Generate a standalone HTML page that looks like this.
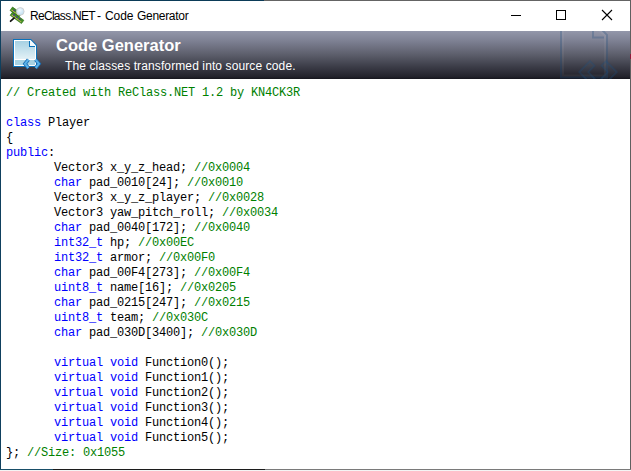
<!DOCTYPE html>
<html><head><meta charset="utf-8">
<style>
html,body{margin:0;padding:0;width:631px;height:471px;overflow:hidden;background:#fff;}
#win{position:absolute;left:0;top:0;width:631px;height:471px;background:#fff;}
.bd{position:absolute;}
#title{position:absolute;left:30px;top:7px;font-family:"Liberation Sans",sans-serif;font-size:12px;color:#000;white-space:nowrap;line-height:18px;}
#hdr{position:absolute;left:1px;top:31px;width:629px;height:48px;background:linear-gradient(#9397aa 0%,#7c7f91 22%,#5e606d 48%,#3c3d48 74%,#23232c 95%,#16161d 100%);overflow:hidden;}
#h1{position:absolute;left:56px;top:35px;font-family:"Liberation Sans",sans-serif;font-weight:bold;font-size:16.5px;color:#fff;white-space:nowrap;line-height:20px;}
#h2{position:absolute;left:65px;top:59px;font-family:"Liberation Sans",sans-serif;font-size:12px;letter-spacing:0.11px;color:#fff;white-space:nowrap;line-height:14px;}
#code{position:absolute;left:6px;top:86px;font-family:"Liberation Mono",monospace;font-size:12px;letter-spacing:-0.2px;line-height:15px;white-space:pre;color:#000;margin:0;}
.k{color:#0000ff;}
.c{color:#008000;}
.t{display:inline-block;width:48px;}
</style></head><body>
<div id="win">
  <div id="title"><span style="position:absolute;left:0;letter-spacing:-0.7px">ReClass.NET</span><span style="position:absolute;left:67px">-</span><span style="position:absolute;left:75px;letter-spacing:-0.1px">Code</span><span style="position:absolute;left:107px;letter-spacing:-0.3px">Generator</span></div>
  <div id="hdr"></div>
<svg id="ov" width="631" height="471" viewBox="0 0 631 471" style="position:absolute;left:0;top:0">
<!-- borders -->
<rect x="0" y="0" width="264" height="1" fill="#0b3b58"/>
<rect x="264" y="0" width="367" height="1" fill="#646464"/>
<rect x="0" y="0" width="1" height="470" fill="#0f405e"/>
<rect x="630" y="0" width="1" height="470" fill="#606060"/>
<rect x="630" y="54" width="1" height="5" fill="#8e1a3a"/>
<rect x="0" y="469" width="53" height="1" fill="#184e68"/>
<rect x="53" y="469" width="212" height="1" fill="#1c1c1c"/>
<rect x="265" y="469" width="366" height="1" fill="#7a7a7a"/>
<rect x="0" y="470" width="631" height="1" fill="#f4f4f4"/>
<!-- caption buttons -->
<rect x="511" y="15" width="10" height="1" fill="#000"/>
<rect x="556.5" y="10.5" width="9" height="9" fill="none" stroke="#000" stroke-width="1"/>
<path d="M602 10 L612 20 M612 10 L602 20" stroke="#000" stroke-width="1.1" fill="none"/>
<!-- app icon -->
<g>
<g transform="translate(0.8 0.9) rotate(36 15 11)"><rect x="9.5" y="9" width="11" height="4.2" fill="#3f8f22" stroke="#2a6a14" stroke-width="0.6"/><rect x="10.3" y="11.6" width="9.5" height="0.8" fill="#cdbb55"/><rect x="12" y="9.8" width="1.8" height="1.6" fill="#4b3f86"/><rect x="15.5" y="9.8" width="1.8" height="1.6" fill="#4b3f86"/></g>
<g transform="rotate(36 17 17.8)"><rect x="10" y="15.8" width="14" height="4" fill="#3f8f22" stroke="#2a6a14" stroke-width="0.6"/><rect x="11" y="18.2" width="12" height="0.8" fill="#cdbb55"/><rect x="12" y="16.5" width="1.8" height="1.6" fill="#4b3f86"/><rect x="15.6" y="16.5" width="1.8" height="1.6" fill="#4b3f86"/><rect x="19.2" y="16.5" width="1.8" height="1.6" fill="#4b3f86"/></g>
<path d="M10.6 21.2 L14 18.2" stroke="#141414" stroke-width="1.8" stroke-linecap="round"/>
<defs><radialGradient id="gl" cx="0.4" cy="0.35" r="0.7"><stop offset="0" stop-color="#f4fbff"/><stop offset="1" stop-color="#bcdcf0"/></radialGradient></defs>
<circle cx="20.3" cy="11.4" r="3.8" fill="url(#gl)" stroke="#cfcfcf" stroke-width="0.9"/>
</g>
<!-- header doc icon -->
<g>
<defs><linearGradient id="dgA" x1="0" y1="0" x2="0" y2="1"><stop offset="0" stop-color="#a6d1e3"/><stop offset="1" stop-color="#e3f1f6"/></linearGradient></defs>
<path d="M13 39 H31 L37 45 V67 H13 Z" fill="#0b72ba"/>
<path d="M14 40 H30.6 L36 45.4 V66 H14 Z" fill="#ffffff"/>
<path d="M15 41 H29 V47 H35 V59 H15 Z" fill="url(#dgA)"/>
<rect x="15" y="60" width="20" height="5" fill="#a8d2e2"/>
<path d="M30 41 L35 46 H30 Z" fill="#f2f9fc"/>
<rect x="29" y="41" width="1" height="6" fill="#0b72ba"/>
<rect x="29" y="46" width="6" height="1" fill="#0b72ba"/>
<path d="M28.4 59.6 L25 63.8 L28.4 68" fill="none" stroke="#1a6cb2" stroke-width="3.6" stroke-linejoin="miter"/>
<path d="M28.4 59.6 L25 63.8 L28.4 68" fill="none" stroke="#5ab2e8" stroke-width="2" stroke-linejoin="miter"/>
<path d="M35.6 59.6 L39 63.8 L35.6 68" fill="none" stroke="#1a6cb2" stroke-width="3.6" stroke-linejoin="miter"/>
<path d="M35.6 59.6 L39 63.8 L35.6 68" fill="none" stroke="#5ab2e8" stroke-width="2" stroke-linejoin="miter"/>
</g>
<!-- watermark -->
<svg x="0" y="31" width="630" height="48" viewBox="0 31 630 48" overflow="hidden">
<g transform="translate(534 -55.5) scale(2)">
<path d="M13.5 39.5 H30.8 L36.5 45.2 V66.5 H13.5 Z" fill="none" stroke="#1f4f7e" stroke-opacity="0.27" stroke-width="1"/>
<path d="M14.5 40.5 H30.4 L35.5 45.6 V65.5 H14.5 Z" fill="none" stroke="#ffffff" stroke-opacity="0.05" stroke-width="1"/>
<path d="M29.5 41 V46.5 H35" fill="none" stroke="#1f4f7e" stroke-opacity="0.27" stroke-width="1"/>
<path d="M28 58.3 L30.3 60.6 L27.2 63.8 L30.3 67 L28 69.3 L22.6 63.8 Z" fill="#5a7590" fill-opacity="0.08" stroke="#1f4f7e" stroke-opacity="0.3" stroke-width="0.9"/>
<path d="M36 58.3 L33.7 60.6 L36.8 63.8 L33.7 67 L36 69.3 L41.4 63.8 Z" fill="#5a7590" fill-opacity="0.08" stroke="#1f4f7e" stroke-opacity="0.3" stroke-width="0.9"/>
</g>
</svg>
</svg>
</svg>
  <div id="h1">Code Generator</div>
  <div id="h2">The classes transformed into source code.</div>
<pre id="code"><span class="c">// Created with ReClass.NET 1.2 by KN4CK3R</span>

<span class="k">class</span> Player
{
<span class="k">public</span>:
<span class="t"></span>Vector3 x_y_z_head; <span class="c">//0x0004</span>
<span class="t"></span><span class="k">char</span> pad_0010[24]; <span class="c">//0x0010</span>
<span class="t"></span>Vector3 x_y_z_player; <span class="c">//0x0028</span>
<span class="t"></span>Vector3 yaw_pitch_roll; <span class="c">//0x0034</span>
<span class="t"></span><span class="k">char</span> pad_0040[172]; <span class="c">//0x0040</span>
<span class="t"></span><span class="k">int32_t</span> hp; <span class="c">//0x00EC</span>
<span class="t"></span><span class="k">int32_t</span> armor; <span class="c">//0x00F0</span>
<span class="t"></span><span class="k">char</span> pad_00F4[273]; <span class="c">//0x00F4</span>
<span class="t"></span><span class="k">uint8_t</span> name[16]; <span class="c">//0x0205</span>
<span class="t"></span><span class="k">char</span> pad_0215[247]; <span class="c">//0x0215</span>
<span class="t"></span><span class="k">uint8_t</span> team; <span class="c">//0x030C</span>
<span class="t"></span><span class="k">char</span> pad_030D[3400]; <span class="c">//0x030D</span>

<span class="t"></span><span class="k">virtual</span> <span class="k">void</span> Function0();
<span class="t"></span><span class="k">virtual</span> <span class="k">void</span> Function1();
<span class="t"></span><span class="k">virtual</span> <span class="k">void</span> Function2();
<span class="t"></span><span class="k">virtual</span> <span class="k">void</span> Function3();
<span class="t"></span><span class="k">virtual</span> <span class="k">void</span> Function4();
<span class="t"></span><span class="k">virtual</span> <span class="k">void</span> Function5();
}; <span class="c">//Size: 0x1055</span></pre>
</div>
</body></html>
